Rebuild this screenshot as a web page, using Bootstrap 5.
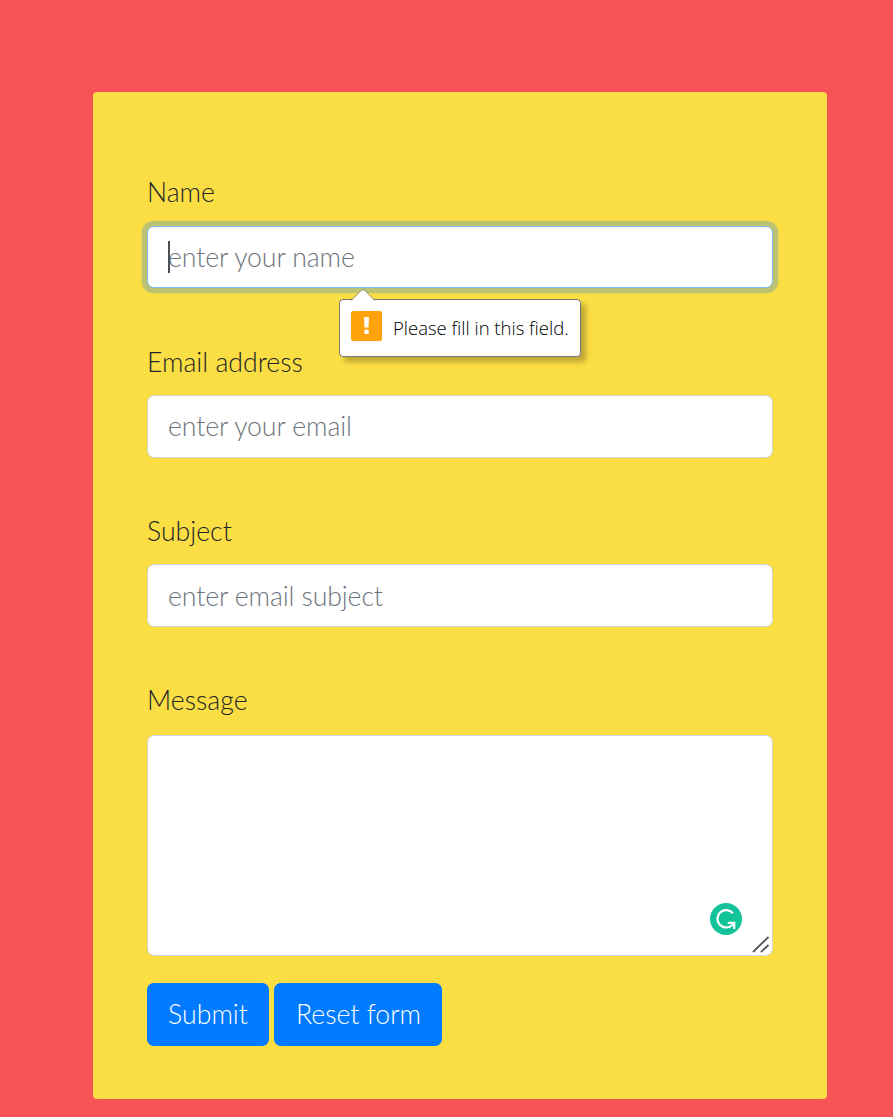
<!DOCTYPE html>
<html lang="en">
<head>
<meta charset="utf-8">
<meta name="viewport" content="width=device-width, initial-scale=1">
<title>Contact form</title>
<link href="https://cdn.jsdelivr.net/npm/bootstrap@5.3.0/dist/css/bootstrap.min.css" rel="stylesheet">
<style>
  body { background: #f75258; font: 300 26.67px/40px Lato, "Liberation Sans", sans-serif; color: #212529; overflow: hidden; padding: 92px 66px 0 93px; }
  .contact-card { background: #fbdd44; border: 0; border-radius: 4px; height: 1007px; padding: 80.3px 54px 0; color: #212529; }
  .field-group { height: 169.33px; }
  .form-label { display: block; margin: 0 0 13.4px; line-height: 40px; }
  .form-control { font-size: 26.67px; font-weight: 300; line-height: 40px; height: 62.6px; padding: 9px 20px; border: 1px solid #ced4da; border-radius: 6.67px; color: #495057; }
  .form-control::placeholder { color: #6c757d; opacity: 1; letter-spacing: -.11px; }
  .form-control.is-active { border-color: #80bdff; box-shadow: 0 0 0 5.33px rgba(0,123,255,.25); }
  textarea.form-control { height: 221px; min-height: 0; resize: none; display: block; }
  .message-label { margin-bottom: 14.5px; }
  .text-caret { left: 21px; top: 15px; width: 2px; height: 32px; background: #495057; }
  .hint { left: 192px; top: 73px; width: 242px; height: 58px; background: #fff; border: 1px solid #777; border-radius: 4px; box-shadow: 5px 5px 5px rgba(0,0,0,.24); z-index: 3; padding: 0 0 0 11px; }
  .hint-arrow { left: 11px; top: -11px; }
  .hint-text { font: 300 18.5px/28px "Open Sans", "Noto Sans", sans-serif; color: #000; white-space: nowrap; margin-left: 11px; }
  .hint-icon { margin-top: -4px; }
  .writing-badge { right: 31px; bottom: 21px; }
  .grip { right: 3px; bottom: 3px; }
  .btn-primary { --bs-btn-bg: #007bff; --bs-btn-border-color: #007bff; font-size: 26.67px; font-weight: 300; line-height: 40px; height: 63px; padding: 10.5px 0; border-radius: 6.67px; }
  .btn-send { width: 122px; }
  .btn-clear { width: 168px; padding-left: 1px; }
  .actions { gap: 5px; margin-top: 27px; }
</style>
</head>
<body>
<main class="card contact-card">
  <form novalidate>
    <div class="field-group">
      <label class="form-label" for="name">Name</label>
      <div class="position-relative">
        <input class="form-control is-active" id="name" placeholder="enter your name">
        <span class="text-caret position-absolute"></span>
        <div class="hint position-absolute d-flex align-items-center">
          <svg class="hint-arrow position-absolute" width="24" height="12" viewBox="0 0 24 12"><path d="M0 12 10.2 1.5Q12 0 13.8 1.5L24 12Z" fill="#fff"/><path d="M0 11.5 10.2 1.5Q12 0 13.8 1.5L24 11.5" fill="none" stroke="#777" stroke-width=".8"/></svg>
          <svg class="hint-icon flex-shrink-0" width="31" height="30" viewBox="0 0 31 30"><rect width="31" height="30" rx="2" fill="#ffa30d"/><path d="M13 6h5l-.5 10.500h-4z" fill="#fff"/><rect x="13.200" y="18.500" width="4.600" height="4.500" rx="1.500" fill="#fff"/></svg>
          <span class="hint-text">Please fill in this field.</span>
        </div>
      </div>
    </div>
    <div class="field-group">
      <label class="form-label" for="email">Email address</label>
      <input class="form-control" id="email" type="email" placeholder="enter your email">
    </div>
    <div class="field-group">
      <label class="form-label" for="subject">Subject</label>
      <input class="form-control" id="subject" placeholder="enter email subject">
    </div>
    <div>
      <label class="form-label message-label" for="message">Message</label>
      <div class="position-relative">
        <textarea class="form-control" id="message"></textarea>
        <svg class="writing-badge position-absolute" width="32" height="32" viewBox="0 0 32 32"><circle cx="16" cy="16" r="16" fill="#15c39a"/><path d="M22.800 10.200A8.700 8.700 0 1 0 22 22.200L24 20" fill="none" stroke="#fff" stroke-width="2.200"/><path d="M17.800 19.800H24.200V26" fill="none" stroke="#fff" stroke-width="2.200"/></svg>
        <svg class="grip position-absolute" width="18" height="17" viewBox="0 0 18 17"><path d="M1 16 16.500 1M9 16l7.500-7" stroke="#555" stroke-width="1.800"/></svg>
      </div>
    </div>
    <div class="actions d-flex">
      <button type="button" class="btn btn-primary btn-send">Submit</button>
      <button type="button" class="btn btn-primary btn-clear">Reset form</button>
    </div>
  </form>
</main>
<script src="https://cdn.jsdelivr.net/npm/bootstrap@5.3.0/dist/js/bootstrap.bundle.min.js"></script>
</body>
</html>
